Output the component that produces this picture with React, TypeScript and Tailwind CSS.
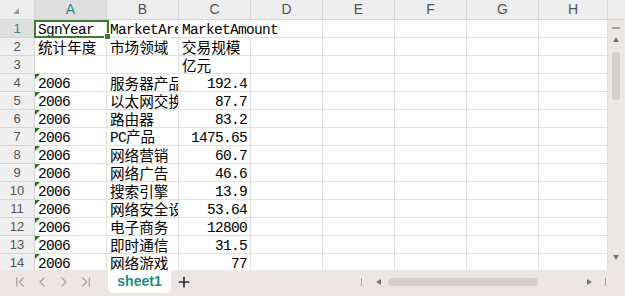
import React from "react";
import { ChevronFirst, ChevronLast, ChevronLeft, ChevronRight, Plus } from "lucide-react";

type Cell = { t: string; num?: boolean; flag?: boolean; zh?: boolean };

const rows: Cell[][] = [
  [{ t: "SgnYear" }, { t: "MarketArea" }, { t: "MarketAmount" }],
  [{ t: "统计年度", zh: true }, { t: "市场领域", zh: true }, { t: "交易规模", zh: true }],
  [{ t: "" }, { t: "" }, { t: "亿元", zh: true }],
  [{ t: "2006", flag: true }, { t: "服务器产品", zh: true }, { t: "192.4", num: true }],
  [{ t: "2006", flag: true }, { t: "以太网交换机", zh: true }, { t: "87.7", num: true }],
  [{ t: "2006", flag: true }, { t: "路由器", zh: true }, { t: "83.2", num: true }],
  [{ t: "2006", flag: true }, { t: "PC产品", zh: true }, { t: "1475.65", num: true }],
  [{ t: "2006", flag: true }, { t: "网络营销", zh: true }, { t: "60.7", num: true }],
  [{ t: "2006", flag: true }, { t: "网络广告", zh: true }, { t: "46.6", num: true }],
  [{ t: "2006", flag: true }, { t: "搜索引擎", zh: true }, { t: "13.9", num: true }],
  [{ t: "2006", flag: true }, { t: "网络安全设备", zh: true }, { t: "53.64", num: true }],
  [{ t: "2006", flag: true }, { t: "电子商务", zh: true }, { t: "12800", num: true }],
  [{ t: "2006", flag: true }, { t: "即时通信", zh: true }, { t: "31.5", num: true }],
  [{ t: "2006", flag: true }, { t: "网络游戏", zh: true }, { t: "77", num: true }],
];

const cols = ["A", "B", "C", "D", "E", "F", "G", "H"];
const mono = { fontFamily: '"Liberation Mono", "Noto Sans CJK SC", monospace' };

function Text({ c }: { c: Cell }) {
  const parts = c.t.match(/[\u4e00-\u9fff]+|[^\u4e00-\u9fff]+/g) || [];
  return (
    <>
      {parts.map((p, i) =>
        /[\u4e00-\u9fff]/.test(p) ? (
          <span key={i} className="text-[14.6px]" style={{ fontFamily: '"Noto Sans CJK SC", sans-serif' }}>
            {p}
          </span>
        ) : (
          <span key={i} className="text-[14.5px] tracking-[-0.7px]" style={mono}>
            {p}
          </span>
        )
      )}
    </>
  );
}

export default function App() {
  return (
    <div className="w-[625px] h-[296px] overflow-hidden bg-white flex flex-col select-none" style={{ fontFamily: '"Liberation Sans", Arial, sans-serif' }}>
      {/* column header */}
      <div className="flex h-[20px] bg-[#eeeeee] shrink-0">
        <div className="w-[35px] h-[20px] border-r border-b border-[#d6d6d6] relative shrink-0">
          <div className="absolute left-[13px] top-[8px] w-0 h-0 border-l-[6px] border-l-transparent border-b-[6px] border-b-[#9a9a9a]" />
        </div>
        {cols.map((c, i) => (
          <div
            key={c}
            className={`${i === 7 ? "w-[69px]" : "w-[72px]"} h-[20px] shrink-0 flex items-center justify-center border-r border-b border-[#d6d6d6] text-[14px] ${
              i === 0 ? "bg-[#dfdfdf] text-[#1f8c86]" : "text-[#555]"
            }`}
          >
            {c}
          </div>
        ))}
        <div className="flex-1 border-b border-[#d6d6d6]" />
      </div>

      <div className="flex h-[250px] shrink-0">
        {/* grid body */}
        <div className="w-[608px] h-[250px] overflow-hidden relative">
          {rows.map((r, ri) => (
            <div key={ri} className="flex h-[18px]">
              <div
                className={`w-[35px] h-[18px] shrink-0 flex items-center justify-center border-r border-b border-[#d6d6d6] text-[13px] ${
                  ri === 0 ? "bg-[#dfdfdf] text-[#1f8c86]" : "bg-[#efefef] text-[#555]"
                }`}
              >
                {ri + 1}
              </div>
              {cols.map((c, ci) => {
                const cell = ci < 3 ? r[ci] : { t: "" };
                const overflow = ri === 0 && ci === 2;
                return (
                  <div
                    key={c}
                    className={`${ci === 7 ? "w-[69px]" : "w-[72px]"} h-[18px] shrink-0 relative border-b border-[#e1e1e1] ${
                      overflow ? "overflow-visible z-10" : "border-r overflow-hidden"
                    } whitespace-nowrap flex items-center ${
                      cell.num ? "justify-end pr-[3px]" : "pl-[3px]"
                    } text-black leading-[17px]`}
                  >
                    {cell.flag && (
                      <div className="absolute left-0 top-0 w-0 h-0 border-t-[5px] border-t-[#1e7a2a] border-r-[5px] border-r-transparent" />
                    )}
                    <span className="pt-[1px]">
                      <Text c={cell} />
                    </span>
                  </div>
                );
              })}
            </div>
          ))}
          {/* selection */}
          <div className="absolute left-[34px] top-0 w-[75px] h-[18px] border-2 border-[#3a7d2c] z-20" />
          <div className="absolute left-[104px] top-[13px] w-[5px] h-[5px] bg-[#3a7d2c] border border-white z-30 box-content" />
        </div>
        {/* vertical scrollbar */}
        <div className="w-[17px] h-[250px] bg-[#ece7e5] relative">
          <div className="absolute left-[4px] top-[7px] w-[8px] h-[1.5px] bg-[#a9a5a4]" />
          <div className="absolute left-[5px] top-[17px] w-0 h-0 border-l-[3.5px] border-r-[3.5px] border-l-transparent border-r-transparent border-b-[5px] border-b-[#7b7776]" />
          <div className="absolute left-[4px] top-[32px] w-[8px] h-[48px] rounded-full bg-[#d4cfcd]" />
          <div className="absolute left-[5px] top-[235px] w-0 h-0 border-l-[3.5px] border-r-[3.5px] border-l-transparent border-r-transparent border-t-[5px] border-t-[#7b7776]" />
        </div>
      </div>

      {/* bottom bar */}
      <div className="flex-1 bg-[#ede6e4] flex items-start relative">
        <div className="flex items-center h-[24px] pl-[12px] gap-[6px] text-[#a8a8a8]">
          <ChevronFirst size={16} strokeWidth={2} />
          <ChevronLeft size={16} strokeWidth={2} />
          <ChevronRight size={16} strokeWidth={2} />
          <ChevronLast size={16} strokeWidth={2} />
        </div>
        <div className="ml-[14px] w-[63px] h-[23px] bg-white rounded-b-[6px] flex items-center justify-center text-[14px] font-bold text-[#1e8a80]">
          sheet1
        </div>
        <div className="ml-[5px] h-[24px] flex items-center text-[#333]">
          <Plus size={16} strokeWidth={2.6} />
        </div>
        <div className="ml-auto flex items-center h-[24px] pr-[19px]">
          <div className="w-[1px] h-[8px] bg-[#a5a1a0]" />
          <div className="ml-[14px] w-0 h-0 border-t-[3.5px] border-b-[3.5px] border-t-transparent border-b-transparent border-r-[5px] border-r-[#7b7776]" />
          <div className="ml-[7px] w-[150px] h-[8px] rounded-full bg-[#d4cfcd]" />
          <div className="ml-[49px] w-0 h-0 border-t-[3.5px] border-b-[3.5px] border-t-transparent border-b-transparent border-l-[5px] border-l-[#7b7776]" />
          <div className="ml-[13px] w-[1px] h-[8px] bg-[#a5a1a0]" />
        </div>
      </div>
    </div>
  );
}
